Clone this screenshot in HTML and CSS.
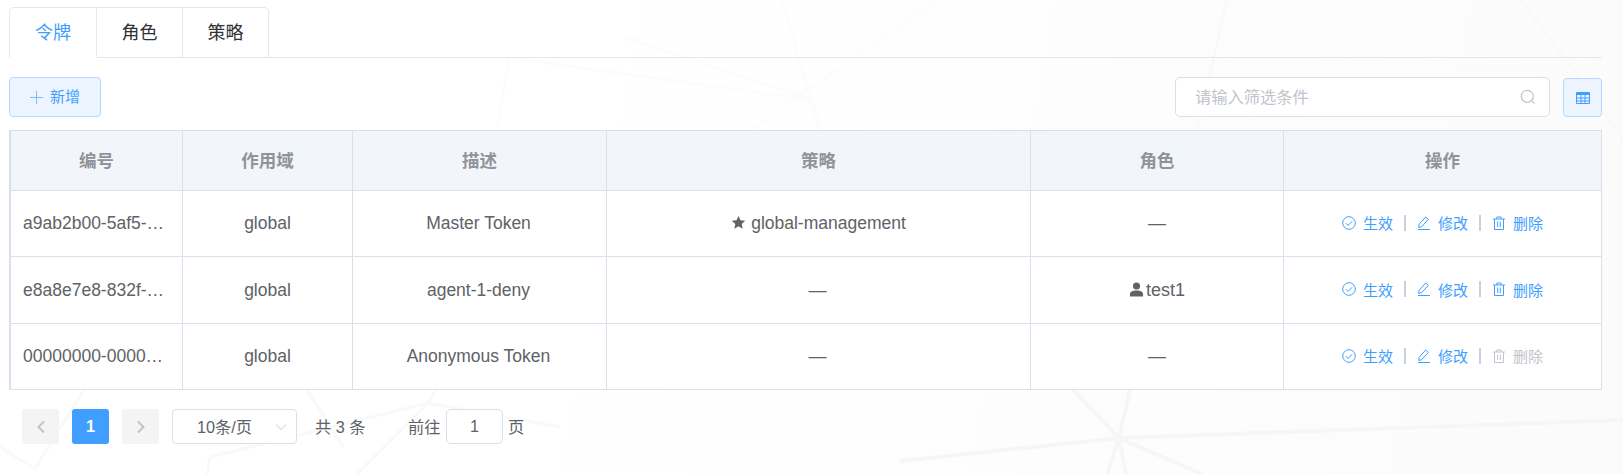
FILE: index.html
```html
<!DOCTYPE html>
<html lang="zh-CN">
<head>
<meta charset="utf-8">
<title>令牌</title>
<link rel="stylesheet" href="styles.css">
</head>
<body>
<svg class="bg-art" width="1623" height="474" viewBox="0 0 1623 474" aria-hidden="true">
  <g class="bg-lines">
    <path class="faint" d="M782 0L820 130M938 0L750 130M626 37L813 100M509 58L813 100M509 58L497 130M1445 0L1390 130"/>
    <path d="M1227 0L1197 130M1521 0L1623 138"/>
    <path d="M84 390L34 470M307 390L343 447M436 390L428 403L210 457L207 474M560 427L428 403L357 474M0 447L32 467"/>
    <path class="strong" d="M1119 438L1623 420M1119 438L900 461M1073 390L1119 438L1202 474M1130 390L1119 438L1105 480M1119 438L1127 480"/>
  </g>
</svg>
<main class="page">
  <nav class="tabs">
    <a class="tab active">令牌</a>
    <a class="tab">角色</a>
    <a class="tab">策略</a>
  </nav>
  <div class="toolbar">
    <button class="btn-add">
      <svg class="ico-plus" viewBox="0 0 13 13"><path d="M6.500 0V13M0 6.500H13"/></svg>
      <span>新增</span>
    </button>
    <div class="toolbar-right">
      <div class="search">
        <span class="placeholder">请输入筛选条件</span>
        <svg class="ico-search" viewBox="0 0 16 16"><circle cx="7.300" cy="7.300" r="6"/><path d="M11.800 11.800L14.600 14.600"/></svg>
      </div>
      <button class="btn-grid">
        <svg viewBox="0 0 14 12" width="14" height="12"><path class="grid-fill" d="M0 1a1 1 0 0 1 1-1h12a1 1 0 0 1 1 1v2H0z"/><path class="grid-line" d="M.5 3v8.500h13V3M.5 6h13M.5 9h13M5 3v8.500M9 3v8.500"/></svg>
      </button>
    </div>
  </div>
  <table class="data">
    <colgroup>
      <col class="c1"><col class="c2"><col class="c3"><col class="c4"><col class="c5"><col class="c6">
    </colgroup>
    <thead>
      <tr><th>编号</th><th>作用域</th><th>描述</th><th>策略</th><th>角色</th><th>操作</th></tr>
    </thead>
    <tbody>
      <tr>
        <td class="id">a9ab2b00-5af5-…</td>
        <td>global</td>
        <td class="nudge">Master Token</td>
        <td><svg class="ico-star" viewBox="0 0 24 24"><path d="M12 1.500l3.200 7 7.600.8-5.700 5.100 1.600 7.500L12 18.100l-6.700 3.800 1.600-7.500L1.200 9.300l7.600-.8z"/></svg><span>global-management</span></td>
        <td class="dash">—</td>
        <td>
          <div class="ops">
            <a class="op"><svg viewBox="0 0 14 14"><circle cx="7" cy="7" r="6.300"/><path d="M4 7.200l2.200 2.200L10.200 5.200"/></svg>生效</a><i></i>
            <a class="op"><svg viewBox="0 0 14 14"><path d="M1.700 11.500l.4-3.200L8.700 1l2.600 2.400L4.700 10.700zM1 13.500h12"/></svg>修改</a><i></i>
            <a class="op"><svg viewBox="0 0 14 14"><path d="M1 3h12M4.800 3V1h4.400v2M2.500 3v10.500h9V3M5.700 5.500v5.500M8.300 5.500v5.500"/></svg>删除</a>
          </div>
        </td>
      </tr>
      <tr>
        <td class="id">e8a8e7e8-832f-…</td>
        <td>global</td>
        <td class="nudge">agent-1-deny</td>
        <td class="dash nudge">—</td>
        <td class="role"><svg class="ico-user" viewBox="0 0 16 16"><circle cx="8" cy="4.300" r="3.800"/><path d="M1 15.500v-2.500c0-2.500 2.500-4 7-4s7 1.500 7 4v2.500z"/></svg><span>test1</span></td>
        <td>
          <div class="ops">
            <a class="op"><svg viewBox="0 0 14 14"><circle cx="7" cy="7" r="6.300"/><path d="M4 7.200l2.200 2.200L10.200 5.200"/></svg>生效</a><i></i>
            <a class="op"><svg viewBox="0 0 14 14"><path d="M1.700 11.500l.4-3.200L8.700 1l2.600 2.400L4.700 10.700zM1 13.500h12"/></svg>修改</a><i></i>
            <a class="op"><svg viewBox="0 0 14 14"><path d="M1 3h12M4.800 3V1h4.400v2M2.500 3v10.500h9V3M5.700 5.500v5.500M8.300 5.500v5.500"/></svg>删除</a>
          </div>
        </td>
      </tr>
      <tr>
        <td class="id">00000000-0000…</td>
        <td>global</td>
        <td class="nudge">Anonymous Token</td>
        <td class="dash nudge">—</td>
        <td class="dash">—</td>
        <td>
          <div class="ops">
            <a class="op"><svg viewBox="0 0 14 14"><circle cx="7" cy="7" r="6.300"/><path d="M4 7.200l2.200 2.200L10.200 5.200"/></svg>生效</a><i></i>
            <a class="op"><svg viewBox="0 0 14 14"><path d="M1.700 11.500l.4-3.200L8.700 1l2.600 2.400L4.700 10.700zM1 13.500h12"/></svg>修改</a><i></i>
            <a class="op disabled"><svg viewBox="0 0 14 14"><path d="M1 3h12M4.800 3V1h4.400v2M2.500 3v10.500h9V3M5.700 5.500v5.500M8.300 5.500v5.500"/></svg>删除</a>
          </div>
        </td>
      </tr>
    </tbody>
  </table>
  <div class="pager">
    <button class="pg-btn"><svg viewBox="0 0 10 14"><path d="M8 1.500L2.500 7 8 12.500"/></svg></button>
    <button class="pg-num">1</button>
    <button class="pg-btn"><svg viewBox="0 0 10 14"><path d="M2 1.500L7.500 7 2 12.500"/></svg></button>
    <div class="pg-size"><span>10条/页</span><svg viewBox="0 0 14 8"><path d="M1 1l6 6 6-6"/></svg></div>
    <span class="pg-total">共 3 条</span>
    <span class="pg-goto">前往</span>
    <div class="pg-input">1</div>
    <span class="pg-unit">页</span>
  </div>
</main>
</body>
</html>
```

FILE: styles.css
```css
* { box-sizing: border-box; }
html, body { margin: 0; height: 474px; overflow: hidden; }
body {
  background: linear-gradient(100deg, #ffffff 0%, #ffffff 35%, #fbfbfb 100%);
  font-family: "Liberation Sans", "Noto Sans CJK SC", sans-serif;
  color: #606266;
  position: relative;
}
.bg-art { position: absolute; left: 0; top: 0; z-index: 0; }
.bg-lines path { fill: none; stroke: #f9f9f9; stroke-width: 3; }
.bg-lines path.faint { stroke: #fcfcfc; stroke-width: 3; }
.bg-lines path.strong { stroke: #f6f6f6; stroke-width: 4; }
.page { position: relative; z-index: 1; padding: 7px 21px 0 9px; }

.tabs { display: flex; height: 51px; border-bottom: 1px solid #e4e7ed; }
.tab {
  width: 86px; height: 51px; display: flex; align-items: center; justify-content: center;
  font-size: 18px; color: #303133; padding-bottom: 3px;
  border: 1px solid #e4e7ed; border-left: 0; background: #fff;
}
.tab:first-child { width: 88px; border-left: 1px solid #e4e7ed; border-top-left-radius: 5px; }
.tab:last-child { border-top-right-radius: 5px; }
.tab.active { color: #409eff; border-bottom-color: #fff; }

.toolbar { display: flex; justify-content: space-between; margin-top: 19px; height: 40px; }
.toolbar-right { display: flex; gap: 13px; }
.btn-add {
  width: 92px; height: 40px; padding: 0; display: flex; align-items: center; justify-content: center; gap: 7px;
  background: #ecf5ff; border: 1px solid #b3d8ff; border-radius: 4px; color: #409eff;
  font: 15px "Liberation Sans", "Noto Sans CJK SC", sans-serif;
}
.btn-add span { padding-bottom: 3px; }
.ico-plus { width: 13px; height: 13px; }
.ico-plus path { stroke: #7dbcff; stroke-width: 1; fill: none; }
.search {
  width: 375px; height: 40px; background: #fff; border: 1px solid #dcdfe6; border-radius: 5px;
  display: flex; align-items: center; justify-content: space-between; padding: 0 13px 0 19px;
}
.placeholder { font-size: 16.25px; color: #c0c4cc; padding-bottom: 2px; }
.ico-search { width: 16px; height: 16px; }
.ico-search circle, .ico-search path { fill: none; stroke: #c0c4cc; stroke-width: 1.2; }
.btn-grid {
  width: 39px; height: 39px; margin-top: 1px; padding: 0; display: flex; align-items: center; justify-content: center;
  background: #ecf5ff; border: 1px solid #b3d8ff; border-radius: 4px;
}
.grid-fill { fill: #409eff; }
.grid-line { fill: none; stroke: #409eff; stroke-width: 1; }

.data {
  width: 1593px; margin-top: 13px; table-layout: fixed; border-collapse: separate; border-spacing: 0;
  border-top: 1px solid #d8e1eb; border-left: 2px solid #d8e1eb; background: #fff;
  font-size: 17.5px;
}
.c1 { width: 172px; } .c2 { width: 170px; } .c3 { width: 254px; }
.c4 { width: 424px; } .c5 { width: 253px; } .c6 { width: 318px; }
.data th, .data td {
  text-align: center; padding: 0; border-right: 1px solid #d8e1eb; border-bottom: 1px solid #d8e1eb;
  white-space: nowrap; overflow: hidden;
}
.data th { height: 60px; background: #f2f6fb; color: #909399; font-weight: 700; padding-bottom: 2px; }
.data td { height: 66px; color: #606266; }
.data tbody tr:nth-child(2) td { height: 67px; }
.data td.id { text-align: left; padding-left: 12px; }
.data td.nudge { padding-right: 2px; }
.dash, .role { font-size: 18px; }
.ico-star { width: 15px; height: 15px; fill: #606266; margin-right: 5px; vertical-align: -1px; }
.ico-user { width: 15px; height: 15px; fill: #606266; vertical-align: -1px; margin-right: 2px; }

.ops { display: flex; align-items: center; justify-content: center; padding-bottom: 2px; }
.ops i { width: 2px; height: 16px; background: #c6d0e0; margin: 0 11px; }
.op { display: flex; align-items: center; gap: 7px; color: #409eff; font-size: 15px; }
.op svg { width: 14px; height: 14px; fill: none; stroke: #409eff; stroke-width: 1; }
.op.disabled { color: #c0c4cc; }
.op.disabled svg { stroke: #c0c4cc; }

.pager { display: flex; align-items: center; margin-top: 19px; padding-left: 13px; font-size: 16.25px; color: #606266; height: 35px; }
.pager span { padding-bottom: 2px; }
.pg-btn, .pg-num {
  width: 37px; height: 35px; padding: 0; border: 0; border-radius: 3px; margin-right: 13px;
  display: flex; align-items: center; justify-content: center; background: #f4f4f5;
  font: 700 16.25px "Liberation Sans", sans-serif;
}
.pg-num { background: #409eff; color: #fff; }
.pg-btn svg { width: 10px; height: 14px; fill: none; stroke: #c0c4cc; stroke-width: 2; }
.pg-size {
  width: 125px; height: 35px; background: #fff; border: 1px solid #dcdfe6; border-radius: 4px;
  display: flex; align-items: center; justify-content: space-between; padding: 0 9px 0 24px;
}
.pg-size svg { width: 12px; height: 8px; fill: none; stroke: #c0c4cc; stroke-width: 1; }
.pg-total { margin-left: 18px; width: 93px; }
.pg-goto { width: 38px; }
.pg-input {
  width: 57px; height: 35px; background: #fff; border: 1px solid #dcdfe6; border-radius: 5px;
  display: flex; align-items: center; justify-content: center;
}
.pg-unit { margin-left: 5px; }
```
